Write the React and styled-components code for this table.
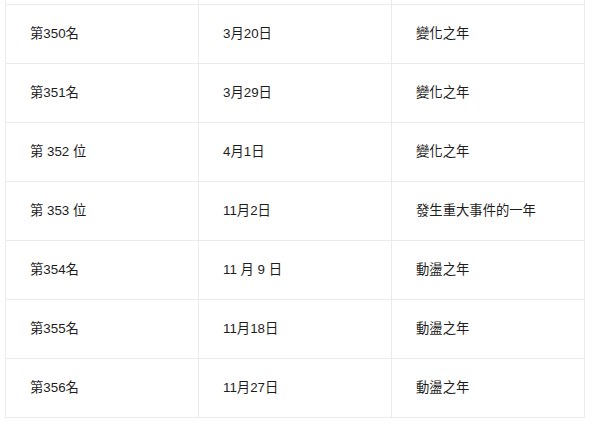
import React from "react";
import styled, { createGlobalStyle } from "styled-components";

const Global = createGlobalStyle`
  html, body { margin: 0; padding: 0; background: #ffffff; }
  body {
    font-family: "Liberation Sans", "Noto Sans CJK TC", sans-serif;
    color: #1d1d1d;
  }
`;

const Table = styled.div`
  margin-left: 5px;
  width: 580px;
  display: grid;
  grid-template-columns: repeat(3, 193px);
  border-left: 1px solid #ebebeb;
`;

const Cell = styled.div`
  box-sizing: border-box;
  height: ${(p) => (p.$cut ? "5px" : "59px")};
  border-right: 1px solid #ebebeb;
  border-bottom: 1px solid #ebebeb;
  padding: 0 24px;
  display: flex;
  align-items: center;
  font-size: 13.33px;
  line-height: 18px;
  white-space: nowrap;
`;

const rows = [
  ["第350名", "3月20日", "變化之年"],
  ["第351名", "3月29日", "變化之年"],
  ["第 352 位", "4月1日", "變化之年"],
  ["第 353 位", "11月2日", "發生重大事件的一年"],
  ["第354名", "11 月 9 日", "動盪之年"],
  ["第355名", "11月18日", "動盪之年"],
  ["第356名", "11月27日", "動盪之年"],
];

export default function App() {
  return (
    <>
      <Global />
      <Table>
        <Cell $cut />
        <Cell $cut />
        <Cell $cut />
        {rows.map((r, i) =>
          r.map((c, j) => <Cell key={`${i}-${j}`}>{c}</Cell>)
        )}
      </Table>
    </>
  );
}
